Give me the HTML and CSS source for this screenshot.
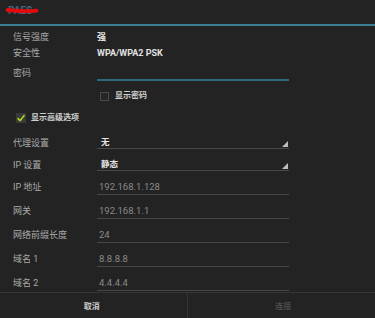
FILE: index.html
```html
<!DOCTYPE html>
<html lang="zh">
<head>
<meta charset="utf-8">
<link rel="stylesheet" href="styles.css">
</head>
<body>
<div class="dialog">
  <div class="header">
    <span class="title">PAES</span>
    <svg class="scribble" width="34" height="9" viewBox="0 0 34 9"><path d="M2.5 4 C10 5 20 5.6 31.5 4.6" stroke="#e10b0b" stroke-width="3.8" stroke-linecap="round" fill="none"/></svg>
  </div>
  <div class="content">
    <div class="info-row"><span class="label">信号强度</span><span class="val">强</span></div>
    <div class="info-row"><span class="label">安全性</span><span class="val">WPA/WPA2 PSK</span></div>
    <div class="pw-row"><span class="label">密码</span><span class="pw-field"></span></div>
    <div class="show-row"><span class="box"></span><span class="cb-text">显示密码</span></div>
    <div class="adv-row"><span class="box checked"><svg width="9" height="9" viewBox="0 0 9 9"><path d="M1.2 4.6 L3.4 7 L8 1.2" stroke="#a6d61c" stroke-width="1.8" fill="none" stroke-linecap="round" stroke-linejoin="round"/></svg></span><span class="cb-text">显示高级选项</span></div>
    <div class="spin-row"><span class="label">代理设置</span><span class="spinner">无</span></div>
    <div class="spin-row"><span class="label">IP 设置</span><span class="spinner">静态</span></div>
    <div class="edit-row"><span class="label">IP 地址</span><span class="edit">192.168.1.128</span></div>
    <div class="edit-row"><span class="label">网关</span><span class="edit">192.168.1.1</span></div>
    <div class="edit-row"><span class="label">网络前缀长度</span><span class="edit">24</span></div>
    <div class="edit-row"><span class="label">域名 1</span><span class="edit">8.8.8.8</span></div>
    <div class="edit-row last"><span class="label">域名 2</span><span class="edit">4.4.4.4</span></div>
  </div>
  <div class="buttons">
    <div class="btn">取消</div>
    <div class="btn disabled">连接</div>
  </div>
</div>
</body>
</html>
```

FILE: styles.css
```css
* { box-sizing: border-box; }
html, body { margin: 0; padding: 0; }
body {
  background: #232323;
  font-family: Roboto, "Noto Sans CJK SC", sans-serif;
  font-size: 9px;
  color: #b4b4b4;
}
.dialog {
  width: 375px;
  height: 318px;
  display: flex;
  flex-direction: column;
}
.header {
  position: relative;
  height: 26px;
  border-bottom: 2px solid #3b7d92;
  padding: 5px 0 0 8px;
}
.title {
  font-size: 10px;
  line-height: 12px;
  color: #4c6478;
  font-weight: bold;
}
.scribble {
  position: absolute;
  left: 5px;
  top: 6px;
}
.content {
  flex: 1;
  padding-top: 3px;
}
.label {
  width: 97px;
  padding-left: 13px;
  flex-shrink: 0;
  line-height: 12px;
  color: #a9a9a9;
}
.info-row {
  height: 16px;
  display: flex;
  align-items: center;
}
.val {
  color: #e2e2e2;
  font-weight: bold;
  line-height: 12px;
}
.pw-row {
  height: 20px;
  display: flex;
  align-items: flex-start;
}
.pw-row .label { padding-top: 6px; }
.pw-field {
  width: 192px;
  height: 20px;
  border-bottom: 2px solid #2d6878;
}
.show-row {
  height: 30px;
  display: flex;
  align-items: center;
  padding-left: 100px;
}
.adv-row {
  height: 14px;
  margin-bottom: 11px;
  display: flex;
  align-items: center;
  padding-left: 16px;
}
.box {
  width: 9px;
  height: 9px;
  border: 1px solid #4a4a4a;
  background: #262626;
  margin-right: 6px;
  display: flex;
  align-items: center;
  justify-content: center;
}
.box.checked {
  width: 10px;
  height: 10px;
  border-color: #3a3a3a;
  background: #3b3b3b;
  margin-right: 5px;
}
.cb-text {
  font-size: 8px;
  color: #cfcfcf;
  font-weight: bold;
  line-height: 10px;
}
.spin-row {
  height: 22px;
  display: flex;
  align-items: flex-start;
}
.spin-row .label { padding-top: 1px; }
.spinner {
  position: relative;
  width: 192px;
  height: 13px;
  border-bottom: 1px solid #484848;
  padding-left: 4px;
  line-height: 12px;
  color: #e6e6e6;
  font-weight: bold;
  font-size: 8.5px;
}
.spinner::after {
  content: "";
  position: absolute;
  right: 1px;
  bottom: 1px;
  width: 0;
  height: 0;
  border-left: 6px solid transparent;
  border-bottom: 6px solid #bdbdbd;
}
.edit-row {
  height: 24px;
  display: flex;
  align-items: flex-start;
}
.edit-row .label { padding-top: 1px; }
.edit-row.last { height: 16px; }
.edit {
  width: 192px;
  height: 15px;
  border-bottom: 1px solid #474747;
  padding-left: 2px;
  padding-top: 1px;
  line-height: 12px;
  font-size: 9.5px;
  color: #8a8a8a;
}
.buttons {
  height: 26px;
  border-top: 1px solid #353535;
  display: flex;
}
.btn {
  flex: 1;
  display: flex;
  align-items: center;
  justify-content: center;
  font-size: 8px;
  font-weight: bold;
  color: #cccccc;
}
.btn:first-child {
  border-right: 1px solid #353535;
  padding-right: 3px;
}
.btn.disabled {
  color: #4c4c4c;
  padding-left: 4px;
}
```
